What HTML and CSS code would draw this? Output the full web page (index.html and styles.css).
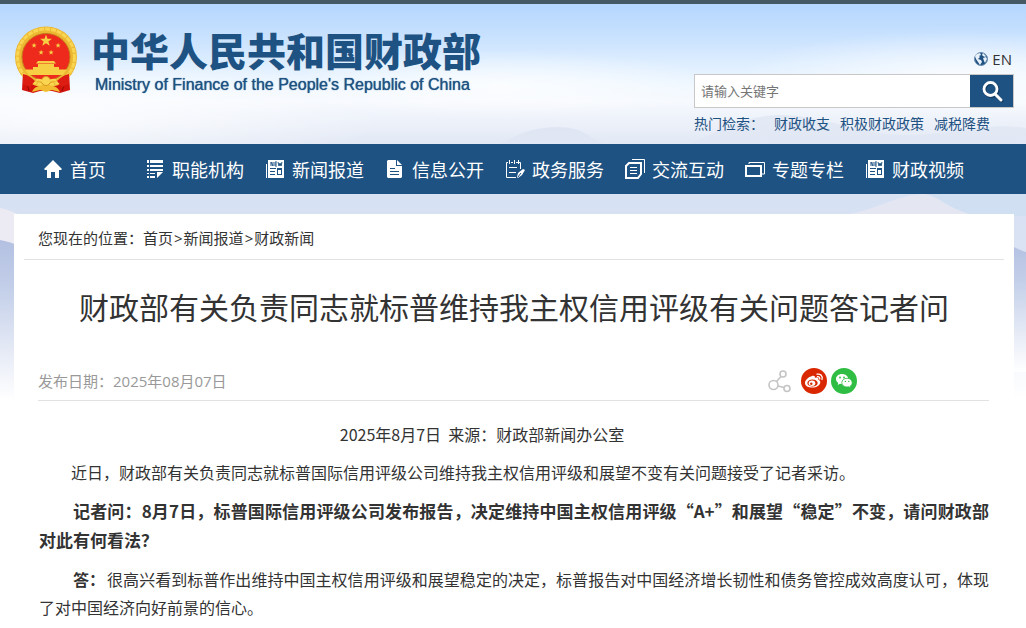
FILE: index.html
```html
<!DOCTYPE html>
<html lang="zh-CN">
<head>
    <meta charset="utf-8">
    <title>财政部有关负责同志就标普维持我主权信用评级有关问题答记者问</title>
    <link rel="stylesheet" href="styles.css">
</head>
<body>

<!-- sky and mountains behind the page -->
<svg class="scenery" viewBox="0 0 1026 420" preserveAspectRatio="none" aria-hidden="true">
    <defs>
        <linearGradient id="sky" x1="0" y1="0" x2="0" y2="1">
            <stop offset="0" stop-color="#b3d5fe"/>
            <stop offset=".08" stop-color="#c6e0fe"/>
            <stop offset=".2" stop-color="#eef7ff"/>
            <stop offset=".24" stop-color="#f6f9fe"/>
            <stop offset=".34" stop-color="#e3e9f5"/>
            <stop offset=".48" stop-color="#d6e1f3"/>
            <stop offset=".62" stop-color="#dae3f3"/>
            <stop offset=".95" stop-color="#fff"/>
        </linearGradient>
        <linearGradient id="peak" x1="0" y1="0" x2="0" y2="1">
            <stop offset="0" stop-color="#b3c0e1"/>
            <stop offset=".3" stop-color="#c3cfe9"/>
            <stop offset="1" stop-color="#fff"/>
        </linearGradient>
        <linearGradient id="ridge" x1="0" y1="0" x2="0" y2="1">
            <stop offset="0" stop-color="#dbe3f1"/>
            <stop offset="1" stop-color="#e0e6f3"/>
        </linearGradient>
        <radialGradient id="glow">
            <stop offset="0" stop-color="#fff" stop-opacity=".75"/>
            <stop offset="1" stop-color="#fff" stop-opacity="0"/>
        </radialGradient>
    </defs>
    <rect width="1026" height="420" fill="url(#sky)"/>
    <ellipse cx="60" cy="115" rx="330" ry="60" fill="url(#glow)"/>
    <ellipse cx="500" cy="85" rx="220" ry="35" fill="url(#glow)"/>
    <ellipse cx="960" cy="75" rx="220" ry="45" fill="url(#glow)"/>
    <path d="M500 144c18-10 34-17 58-17s32 11 46 17z" fill="url(#ridge)" opacity=".7"/>
    <path d="M690 144c30-14 60-30 92-29 50 2 70 18 120 20 40 2 80-14 124-7v16z" fill="url(#ridge)" opacity=".6"/>
    <path d="M0 208c12 2 20 8 34 14v60H0z" fill="#eceaf3"/>
    <path d="M925 194c14 3 26 16 44 22h57v-22z" fill="#d0dff2"/>
    <path d="M925 194c14 3 20 12 44 20H850c30-6 50-20 75-20z" fill="#e4e7f2"/>
    <path d="M0 240c6 1 12 3 20 6v154H0z" fill="url(#peak)"/>
    <path d="M1000 242c10 2 18 8 26 10v120h-26z" fill="url(#peak)"/>
</svg>

<div class="topbar"></div>

<header class="header">
    <a class="logo" href="#">
        <svg class="emblem" viewBox="0 0 64 68" aria-hidden="true">
            <path d="M9 46L8 64l11 3 7-2h12l8 2 10-3-1-18z" fill="#d3130c"/>
            <path d="M12 54l3 11M52 54l-4 11" stroke="#8e0b05" fill="none"/>
            <ellipse cx="32" cy="31" rx="31" ry="30.500" fill="#ecb832"/>
            <ellipse cx="32" cy="31" rx="28.500" ry="28" fill="none" stroke="#f9d551" stroke-width="3" stroke-dasharray="5 1"/>
            <ellipse cx="32" cy="31" rx="24" ry="23.500" fill="#ee2a1c" stroke="#c5781b"/>
            <g fill="#f6cf45">
                <path id="star" d="M32 8.500l1.500 4.200 4.400.1-3.500 2.700 1.300 4.300-3.700-2.500-3.700 2.500 1.300-4.300-3.500-2.700 4.400-.1z"/>
                <use href="#star" transform="translate(6 13) scale(.44)"/>
                <use href="#star" transform="translate(30 13) scale(.44)"/>
                <use href="#star" transform="translate(13 20) scale(.44)"/>
                <use href="#star" transform="translate(23 20) scale(.44)"/>
                <path d="M24 35h16l2 2.500H22zM24 38h16v3h5v2.500H19V41h5zM11 43.500h42c-2 3-3 4-4 5.500H15c-2-2-3-3.500-4-5.500z"/>
            </g>
            <path d="M9 48c5 1 9 4 12 7l-5 6-7-3zM55 48c-5 1-9 4-12 7l5 6 7-3z" fill="#dd1c12"/>
            <path d="M18 66c2-5 7-7 14-7s12 2 14 7l-8-2-6 2-6-2z" fill="#f2bc32"/>
            <circle cx="32" cy="55" r="4.500" fill="#f9d551" stroke="#d99423"/>
            <path d="M22 54c4-1 6 0 9 4M42 54c-4-1-6 0-9 4" stroke="#f9d551" stroke-width="2" fill="none"/>
        </svg>
        <span class="logo-text">
            <strong class="logo-cn">中华人民共和国财政部</strong>
            <span class="logo-en">Ministry of Finance of the People's Republic of China</span>
        </span>
    </a>

    <div class="tools">
        <a class="lang" href="#">
            <svg width="14" height="14" viewBox="0 0 14 14" aria-hidden="true">
                <circle cx="7" cy="7" r="6.500" fill="#1e5282" stroke="#6d8fb0"/>
                <path d="M3 2l3-1 1 2-2 1 1 1-2 2 3 1 1 2-2 3-2-3-2-3-1-3zM9 1l3 3-1 1-2-1-1-1zM9 6l3-1 1 2-2 4-1-2z" fill="#e8f1fa"/>
            </svg>
            EN
        </a>
        <form class="search" action="#">
            <input class="search-input" type="text" placeholder="请输入关键字" aria-label="请输入关键字">
            <button class="search-button" type="submit" aria-label="搜索">
                <svg width="24" height="24" viewBox="0 0 24 24" fill="none" aria-hidden="true">
                    <g stroke="#143b60" transform="translate(2 2)"><circle cx="9.500" cy="9" r="6.500" stroke-width="3"/><path d="M14 14l6 6" stroke-width="3" stroke-linecap="round"/></g>
                    <g stroke="#fff" transform="translate(1 1)"><circle cx="9.500" cy="9" r="6.500" stroke-width="2.800"/><path d="M14 14l6 6" stroke-width="3" stroke-linecap="round"/></g>
                </svg>
            </button>
        </form>
        <div class="hot">
            <span class="hot-label">热门检索：</span>
            <a href="#">财政收支</a>
            <a href="#">积极财政政策</a>
            <a href="#">减税降费</a>
        </div>
    </div>
</header>

<nav class="nav">
    <a class="nav-item nav-home" href="#">
        <svg width="20" height="20" viewBox="0 0 20 20" aria-hidden="true"><path d="M10 1l9 9-1 1h-2v8h-4v-6H8v6H4v-8H2l-1-1z" fill="#fff"/></svg>
        首页
    </a>
    <a class="nav-item" href="#">
        <svg width="20" height="20" viewBox="0 0 20 20" aria-hidden="true"><path d="M2 1h2v3H2zM2 6h2v2H2zM2 10h2v2H2zM2 14h2v1H2zM2 17h2v2H2zM5 1h13v3H5zM5 6h13v2H5zM5 10h13v2H5zM5 14h5v1H5zM5 17h5v2H5zM12 13h6l-6 6z" fill="#fff"/></svg>
        职能机构
    </a>
    <a class="nav-item" href="#">
        <svg width="20" height="20" viewBox="0 0 20 20" aria-hidden="true"><path d="M1 5h1v14H1z" fill="#fff"/><path fill-rule="evenodd" d="M3 1h16v18H3zM5 9v1h6V9zM5 12v1h5v-1zM5 15v1h5v-1zM12 9v7h5V9zM13 11h3v4h-3z" fill="#fff"/><path d="M6 7V3l2 4V3M12 3H10v4h2M10 5h2M13 3l1 4 1-3 1 3 1-4" fill="none" stroke="#1e5282"/></svg>
        新闻报道
    </a>
    <a class="nav-item" href="#">
        <svg width="20" height="20" viewBox="0 0 20 20" aria-hidden="true"><path fill-rule="evenodd" d="M2 2l1-1h8v6h6v11l-1 1H3l-1-1zM5 9v1h5V9zM5 12v1h9v-1zM5 15v1h9v-1z" fill="#fff"/><path d="M12 1l5 5h-5z" fill="#fff"/></svg>
        信息公开
    </a>
    <a class="nav-item" href="#">
        <svg width="20" height="20" viewBox="0 0 20 20" fill="none" aria-hidden="true"><path d="M11 18.500H1.500v-15H3M6 3.500h2M11 3.500h4.500V10M4.500 1v4M9.500 1v4M13.500 1v4M4 8.500h8M4 13.500h7" stroke="#fff"/><path d="M12 18l1-4 5-4 2 1-3 5-4 3z" fill="#fff"/><path d="M13 18l3-4" stroke="#1e5282"/></svg>
        政务服务
    </a>
    <a class="nav-item" href="#">
        <svg width="20" height="20" viewBox="0 0 20 20" fill="none" stroke="#fff" aria-hidden="true"><path d="M7 .5h12.500V14"/><path d="M4 4h12v11l-3 4H1V7z" stroke-width="2"/><path d="M5 8.500h7M5 11.500h7M5 14.500h7"/></svg>
        交流互动
    </a>
    <a class="nav-item" href="#">
        <svg width="20" height="20" viewBox="0 0 20 20" fill="none" stroke="#fff" aria-hidden="true"><path d="M4 5V3.500h15.500V15H17"/><path d="M1 7h15v10H1z" stroke-width="2"/></svg>
        专题专栏
    </a>
    <a class="nav-item" href="#">
        <svg width="20" height="20" viewBox="0 0 20 20" aria-hidden="true"><path d="M1 5h1v14H1z" fill="#fff"/><path fill-rule="evenodd" d="M3 1h16v18H3zM5 9v1h6V9zM5 12v1h5v-1zM5 15v1h5v-1zM12 9v7h5V9zM13 11h3v4h-3z" fill="#fff"/><path d="M6 7V3l2 4V3M12 3H10v4h2M10 5h2M13 3l1 4 1-3 1 3 1-4" fill="none" stroke="#1e5282"/></svg>
        财政视频
    </a>
</nav>

<main class="main">
    <div class="crumbs">
        您现在的位置：<a href="#">首页</a><span class="sep">&gt;</span><a href="#">新闻报道</a><span class="sep">&gt;</span><a href="#">财政新闻</a>
    </div>

    <h1 class="title">财政部有关负责同志就标普维持我主权信用评级有关问题答记者问</h1>

    <div class="meta">
        <span class="date">发布日期：2025年08月07日</span>
        <div class="share">
            <a class="share-link share-more" href="#" aria-label="分享">
                <svg width="26" height="26" viewBox="0 0 26 26" fill="none" stroke="#c4c4c4" stroke-width="1.600" aria-hidden="true"><circle cx="6.500" cy="17" r="4.500"/><circle cx="16" cy="6" r="3"/><circle cx="20" cy="20.500" r="3"/><path d="M9.500 13.500l4.500-5M11 18l6 1.500"/></svg>
            </a>
            <a class="share-link" href="#" aria-label="微博">
                <svg width="26" height="26" viewBox="0 0 26 26" aria-hidden="true">
                    <circle cx="13" cy="13" r="13" fill="#d92700"/>
                    <path d="M11 8c2-.8 3.500 0 2.800 2 2.500-1 4.300-.2 3.500 1.800 1.300.4 2 1.200 2 2.400 0 3-3.800 5.400-8 5.400-4 0-7.300-1.800-7.300-4.700C4 12 7.800 8.800 11 8z" fill="#fff"/>
                    <ellipse cx="11.500" cy="15" rx="5.200" ry="3.600" fill="#d92700"/>
                    <ellipse cx="11" cy="15.300" rx="3.300" ry="2.700" fill="#fff"/>
                    <circle cx="10.300" cy="15.800" r="1.200" fill="#d92700"/>
                    <path d="M16 6.200c3.500-.8 6 2 5 5.300M16.500 8.700c1.500-.3 2.700.9 2.200 2.300" fill="none" stroke="#fff" stroke-width="1.300" stroke-linecap="round"/>
                </svg>
            </a>
            <a class="share-link" href="#" aria-label="微信">
                <svg width="26" height="26" viewBox="0 0 26 26" aria-hidden="true">
                    <circle cx="13" cy="13" r="13" fill="#2fbd43"/>
                    <path d="M11 6c-3.600 0-6 2.300-6 5 0 1.600.8 2.900 2.200 3.900L6.700 17l2.300-1.200c.8.200 1.300.2 2 .2 3.600 0 6.200-2.200 6.200-5S14.600 6 11 6z" fill="#fff"/>
                    <path d="M16 10.300c-3 0-5.200 2-5.200 4.400s2.200 4.300 5.200 4.300l1.700-.2 2 1-.5-1.700c1.300-.8 2-2 2-3.400 0-2.400-2.200-4.400-5.200-4.400z" fill="#fff" stroke="#2fbd43" stroke-width=".8"/>
                    <g fill="#2fbd43"><circle cx="9" cy="9.500" r=".9"/><circle cx="13" cy="9.500" r=".9"/><circle cx="14.400" cy="13.400" r=".7"/><circle cx="17.800" cy="13.400" r=".7"/></g>
                </svg>
            </a>
        </div>
    </div>

    <article class="article">
        <p class="source">2025年8月7日&nbsp; 来源：财政部新闻办公室</p>
        <p>近日，财政部有关负责同志就标普国际信用评级公司维持我主权信用评级和展望不变有关问题接受了记者采访。</p>
        <p class="question"><strong>记者问：8月7日，标普国际信用评级公司发布报告，决定维持中国主权信用评级“A+”和展望“稳定”不变，请问财政部对此有何看法？</strong></p>
        <p><strong class="answer">答：</strong>很高兴看到标普作出维持中国主权信用评级和展望稳定的决定，标普报告对中国经济增长韧性和债务管控成效高度认可，体现了对中国经济向好前景的信心。</p>
    </article>
</main>

</body>
</html>
```
FILE: styles.css
```css
* {
    box-sizing: border-box;
}
body {
    margin: 0;
    color: #333;
    background: #fff;
    font-family: "Open Sans", "Noto Sans CJK SC", sans-serif;
    font-size: 15px;
}
a {
    color: inherit;
    text-decoration: none;
}
svg {
    display: block;
    flex: none;
}
.scenery {
    position: absolute;
    top: 0;
    left: 0;
    z-index: -1;
    width: 100%;
    height: 420px;
}
.topbar {
    height: 4px;
    background: #465a64;
}

/* header */
.header {
    display: flex;
    justify-content: space-between;
    height: 140px;
    padding: 0 12px 0 14px;
}
.logo {
    display: flex;
    align-items: flex-start;
    gap: 13px;
    padding-top: 22px;
    color: #1e5282;
}
.emblem {
    width: 64px;
    height: 68px;
}
.logo-text {
    display: flex;
    flex-direction: column;
}
.logo-cn {
    font-family: "Noto Sans CJK SC", sans-serif;
    font-size: 39px;
    font-weight: 900;
    line-height: 46px;
}
.logo-en {
    padding-left: 4px;
    font-family: "Liberation Sans", sans-serif;
    font-size: 16px;
    line-height: 26px;
    text-shadow: 0 0 1px #1e5282;
}
.tools {
    display: flex;
    flex-direction: column;
    width: 320px;
    padding-top: 44px;
}
.lang {
    display: flex;
    align-items: center;
    align-self: flex-end;
    gap: 4px;
    padding-right: 2px;
    line-height: 22px;
}
.search {
    display: flex;
    height: 34px;
    margin-top: 4px;
    border: 1px solid #c8c8c8;
}
.search-input {
    flex: 1;
    min-width: 0;
    padding: 0 6px;
    border: 0;
    background: #fff;
    font-family: inherit;
    font-size: 13px;
}
.search-input::placeholder {
    color: #757575;
}
.search-button {
    display: flex;
    align-items: center;
    justify-content: center;
    width: 43px;
    padding: 0;
    border: 0;
    background: #1e5282;
}
.hot {
    display: flex;
    gap: 10px;
    margin-top: 6px;
    color: #1e5282;
    font-size: 14px;
    line-height: 20px;
    white-space: nowrap;
}

/* navigation */
.nav {
    display: flex;
    height: 50px;
    padding-left: 43px;
    background: #1e5282;
    color: #fff;
    font-size: 18px;
}
.nav-item {
    display: flex;
    align-items: center;
    gap: 7px;
    width: 120px;
    white-space: nowrap;
}
.nav-home {
    width: 102px;
}

/* content */
.main {
    margin: 20px 12px 0 14px;
    padding: 0 10px 20px;
    background: #fff;
}
.crumbs {
    padding: 12px 14px 9px;
    border-bottom: 1px solid #e2e2e2;
    line-height: 24px;
}
.sep {
    padding: 0 1px;
}
.title {
    margin: 26px 0 0;
    font-size: 30px;
    font-weight: normal;
    line-height: 44px;
    text-align: center;
}
.meta {
    display: flex;
    align-items: center;
    justify-content: space-between;
    margin: 38px 15px 0 14px;
    padding-bottom: 6px;
    border-bottom: 1px solid #e2e2e2;
}
.date {
    color: #999;
    line-height: 24px;
}
.share {
    display: flex;
    gap: 4px;
    margin-right: 132px;
}
.share-more {
    margin-right: 4px;
}
.article {
    margin: 19px 15px 0;
    font-family: "Noto Sans CJK SC", sans-serif;
    font-size: 16px;
    line-height: 28px;
}
.article p {
    margin: 0 0 10px;
    text-align: justify;
    text-indent: 2em;
}
.article .source {
    padding-right: 64px;
    text-align: center;
    text-indent: 0;
}
.article .question {
    margin-bottom: 11px;
    font-size: 17px;
    line-height: 29px;
}
.answer {
    padding: 0 2px;
}
```
